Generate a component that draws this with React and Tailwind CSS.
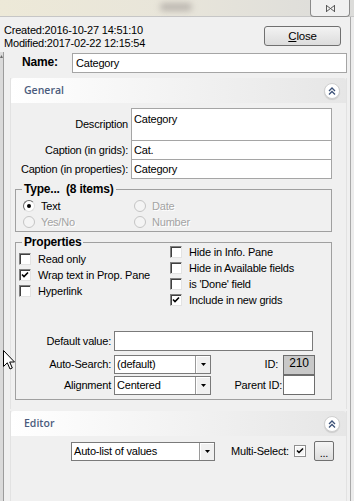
import React from "react";

function Check({ checked }) {
  return (
    <span className="w-[12px] h-[12px] shrink-0 bg-white border border-t-[#808080] border-l-[#808080] border-b-[#e3e3e3] border-r-[#e3e3e3] shadow-[inset_1px_1px_0_#404040] flex items-center justify-center">
      {checked && (
        <svg width="8" height="8" viewBox="0 0 8 8">
          <path d="M1 3.5 L3 5.5 L7 1.5" stroke="#000" strokeWidth="1.6" fill="none" />
        </svg>
      )}
    </span>
  );
}

function Radio({ on, disabled }) {
  return (
    <span
      className={
        disabled
          ? "w-[12px] h-[12px] shrink-0 rounded-full border border-[#c4c4c4] bg-[#f4f4f4]"
          : "w-[12px] h-[12px] shrink-0 rounded-full border border-t-[#6a6a6a] border-l-[#6a6a6a] border-b-[#dedede] border-r-[#dedede] bg-white flex items-center justify-center"
      }
    >
      {on && <span className="w-[4px] h-[4px] rounded-full bg-black" />}
    </span>
  );
}

function CheckRow({ label, checked }) {
  return (
    <div className="h-[16px] flex items-center gap-[7px]">
      <Check checked={checked} />
      <span>{label}</span>
    </div>
  );
}

function Combo({ value, width }) {
  return (
    <div className="flex h-[19px] bg-white border border-[#7a7a7a]" style={{ width }}>
      <span className="flex-1 pl-[2px] leading-[17px] truncate">{value}</span>
      <span className="w-[15px] flex items-center justify-center bg-[#f0f0f0] border-l border-[#9a9a9a] shadow-[inset_1px_1px_0_#fff]">
        <svg width="5" height="3" viewBox="0 0 5 3">
          <path d="M0 0 H5 L2.5 3 Z" fill="#000" />
        </svg>
      </span>
    </div>
  );
}

function Collapse() {
  return (
    <div className="w-[16px] h-[16px] rounded-full bg-white border border-[#d0d0d0] shadow-[0_1px_1px_rgba(0,0,0,0.12)] flex items-center justify-center">
      <svg width="8" height="8" viewBox="0 0 8 8">
        <path d="M1 4 L4 1 L7 4 M1 7.5 L4 4.5 L7 7.5" stroke="#3d5278" strokeWidth="1.3" fill="none" />
      </svg>
    </div>
  );
}

function PanelHeader({ title }) {
  return (
    <div className="h-[25px] shrink-0 rounded-t-[3px] bg-gradient-to-r from-white to-[#e6e6e6] flex items-center justify-between pl-[13px] pr-[6px]">
      <span className="font-['Open_Sans',sans-serif] font-semibold text-[10.5px] tracking-normal text-[#4a5b7c]">{title}</span>
      <Collapse />
    </div>
  );
}

export default function App() {
  return (
    <div className="w-[354px] h-[501px] overflow-hidden bg-[#f0f0f0] text-[11px] leading-[13px] tracking-[-0.2px] text-black font-['Liberation_Sans',Arial,sans-serif] flex flex-col relative select-none">
      {/* blurred title strip */}
      <div className="h-[17px] shrink-0 flex bg-gradient-to-r from-[#ede9d8] via-[#e8e5da] to-[#dcdcda] border-b border-[#c6c6c6]">
        <div className="ml-[160px] mt-[3px] w-[32px] h-[8px] rounded-full bg-[#a9a39e] blur-[3px] opacity-70" />
        <div className="flex-1" />
        <div className="w-[40px] h-[17px] mr-[4px] bg-[#f0f0f0] border border-t-0 border-[#8a8a8a] rounded-b-[4px] flex items-center justify-center">
          <svg width="9" height="7" viewBox="0 0 9 7">
            <path d="M0.5 0 V7 M8.5 0 V7 M0.5 0.5 L8.5 6.5 M8.5 0.5 L0.5 6.5" stroke="#5a5a5a" strokeWidth="1" fill="none" />
          </svg>
        </div>
      </div>

      <div className="flex flex-1 min-h-0">
        <div className="flex-1 flex flex-col min-w-0">
          <div className="h-[35px] shrink-0 flex items-start justify-between pl-[4px] pr-[9px]">
            <div className="pt-[7px]">
              <div>Created:2016-10-27 14:51:10</div>
              <div>Modified:2017-02-22 12:15:54</div>
            </div>
            <button className="mt-[9px] w-[77px] h-[20px] rounded-[3px] border border-[#707070] bg-gradient-to-b from-[#f3f3f3] to-[#dcdcdc] flex items-center justify-center text-[11.5px]">
              <span>
                <span className="underline">C</span>lose
              </span>
            </button>
          </div>

          <div className="flex flex-1 min-h-0">
            {/* left scroll strip */}
            <div className="w-[10px] shrink-0 flex">
              <div className="w-[4px] bg-[#dadada] border-r border-[#9c9c9c] flex flex-col">
                <div className="h-[9px] flex items-center justify-center">
                  <svg width="3" height="3" viewBox="0 0 3 3">
                    <path d="M0 3 L1.5 0 L3 3 Z" fill="#6a6a6a" />
                  </svg>
                </div>
              </div>
            </div>

            <div className="flex-1 flex flex-col min-w-0 pr-[3px]">
              {/* name row */}
              <div className="h-[21px] shrink-0 flex items-center pl-[12px]">
                <span className="w-[50px] font-bold text-[12px]">Name:</span>
                <div className="flex-1 h-[20px] bg-white border border-[#a5a5a5] pl-[3px] leading-[18px]">Category</div>
              </div>

              {/* General */}
              <div className="mt-[5px] flex flex-col border-x border-[#e2e2e2]">
                <PanelHeader title="General" />
                <div className="pt-[5px] pb-[9px]">
                  <div className="grid grid-cols-[120px_201px]">
                    <div className="h-[33px] flex items-center justify-end pr-[3px]">Description</div>
                    <div className="h-[33px] bg-white border border-[#a5a5a5] pl-[2px] pt-[4px]">Category</div>
                    <div className="h-[20px] -mt-px flex items-center justify-end pr-[3px]">Caption (in grids):</div>
                    <div className="h-[20px] -mt-px bg-white border border-[#a5a5a5] pl-[2px] leading-[18px]">Cat.</div>
                    <div className="h-[20px] -mt-px flex items-center justify-end pr-[3px]">Caption (in properties):</div>
                    <div className="h-[20px] -mt-px bg-white border border-[#a5a5a5] pl-[2px] leading-[18px]">Category</div>
                  </div>

                  <fieldset className="mt-[4px] ml-[4px] w-[317px] border border-[#a0a0a0]">
                    <legend className="ml-[6px] px-[2px] font-bold text-[12px] leading-[13px] whitespace-pre">Type...  (8 items)</legend>
                    <div className="grid grid-cols-[111px_1fr] pl-[7px] pt-[2px] pb-[1px]">
                      <div className="h-[16px] flex items-center gap-[6px]">
                        <Radio on />
                        <span>Text</span>
                      </div>
                      <div className="h-[16px] flex items-center gap-[6px] text-[#a3a3a3] [text-shadow:1px_1px_0_#fff]">
                        <Radio disabled />
                        <span>Date</span>
                      </div>
                      <div className="h-[16px] flex items-center gap-[6px] text-[#a3a3a3] [text-shadow:1px_1px_0_#fff]">
                        <Radio disabled />
                        <span>Yes/No</span>
                      </div>
                      <div className="h-[16px] flex items-center gap-[6px] text-[#a3a3a3] [text-shadow:1px_1px_0_#fff]">
                        <Radio disabled />
                        <span>Number</span>
                      </div>
                    </div>
                  </fieldset>

                  <fieldset className="mt-[4px] ml-[4px] w-[317px] border border-[#a0a0a0]">
                    <legend className="ml-[6px] px-[2px] font-bold text-[12px] leading-[13px]">Properties</legend>
                    <div className="flex pl-[3px]">
                      <div className="w-[151px] mt-[2px]">
                        <CheckRow label="Read only" />
                        <CheckRow label="Wrap text in Prop. Pane" checked />
                        <CheckRow label="Hyperlink" />
                      </div>
                      <div className="-mt-[5px]">
                        <CheckRow label="Hide in Info. Pane" />
                        <CheckRow label="Hide in Available fields" />
                        <CheckRow label="is 'Done' field" />
                        <CheckRow label="Include in new grids" checked />
                      </div>
                    </div>

                    <div className="mt-[23px] flex items-center">
                      <span className="w-[95px] text-right">Default value:</span>
                      <div className="ml-[3px] w-[199px] h-[20px] bg-white border border-[#7a7a7a]" />
                    </div>
                    <div className="mt-[3px] flex items-center h-[20px]">
                      <span className="w-[95px] text-right">Auto-Search:</span>
                      <div className="ml-[3px]">
                        <Combo value="(default)" width={97} />
                      </div>
                      <span className="w-[72px] text-right pr-[5px]">ID:</span>
                      <div className="w-[32px] h-[20px] mt-[2px] bg-[#c8c8c8] border border-[#6d6d6d] flex justify-center text-[12px] leading-[15px]">210</div>
                    </div>
                    <div className="mt-[1px] mb-[4px] flex items-center h-[20px]">
                      <span className="w-[95px] text-right">Alignment</span>
                      <div className="ml-[3px]">
                        <Combo value="Centered" width={97} />
                      </div>
                      <span className="w-[72px] text-right pr-[1px]">Parent ID:</span>
                      <div className="w-[32px] h-[20px] bg-white border border-[#6d6d6d]" />
                    </div>
                  </fieldset>
                </div>
              </div>

              {/* Editor */}
              <div className="mt-[2px] flex-1 flex flex-col border-x border-[#e2e2e2]">
                <PanelHeader title="Editor" />
                <div className="mt-[5px] flex items-center pl-[60px]">
                  <Combo value="Auto-list of values" width={144} />
                  <span className="ml-[16px]">Multi-Select:</span>
                  <span className="ml-[5px] w-[12px] h-[12px] border border-[#8e8e8e] bg-[#f4f4f4] shadow-[inset_0_0_0_1px_#fff] flex items-center justify-center">
                    <svg width="8" height="8" viewBox="0 0 8 8">
                      <path d="M1 3.5 L3 5.5 L7 1.5" stroke="#000" strokeWidth="1.5" fill="none" />
                    </svg>
                  </span>
                  <button className="ml-[8px] w-[20px] h-[20px] rounded-[2px] border border-[#707070] bg-gradient-to-b from-[#f5f5f5] to-[#dcdcdc] flex items-end justify-center pb-[3px] leading-[8px]">
                    ...
                  </button>
                </div>
              </div>
            </div>
          </div>
        </div>

        {/* right window edge */}
        <div className="w-[4px] shrink-0 border-l border-[#a9a9a9] bg-[#ececec]" />
      </div>

      {/* mouse pointer */}
      <svg className="absolute left-[3px] top-[350px]" width="13" height="21" viewBox="0 0 13 21">
        <path d="M0.5 0.5 L0.5 16.5 L4.3 12.8 L7 19 L9.3 18 L6.7 12 L11.5 12 Z" fill="#fff" stroke="#000" strokeWidth="1" />
      </svg>
    </div>
  );
}
